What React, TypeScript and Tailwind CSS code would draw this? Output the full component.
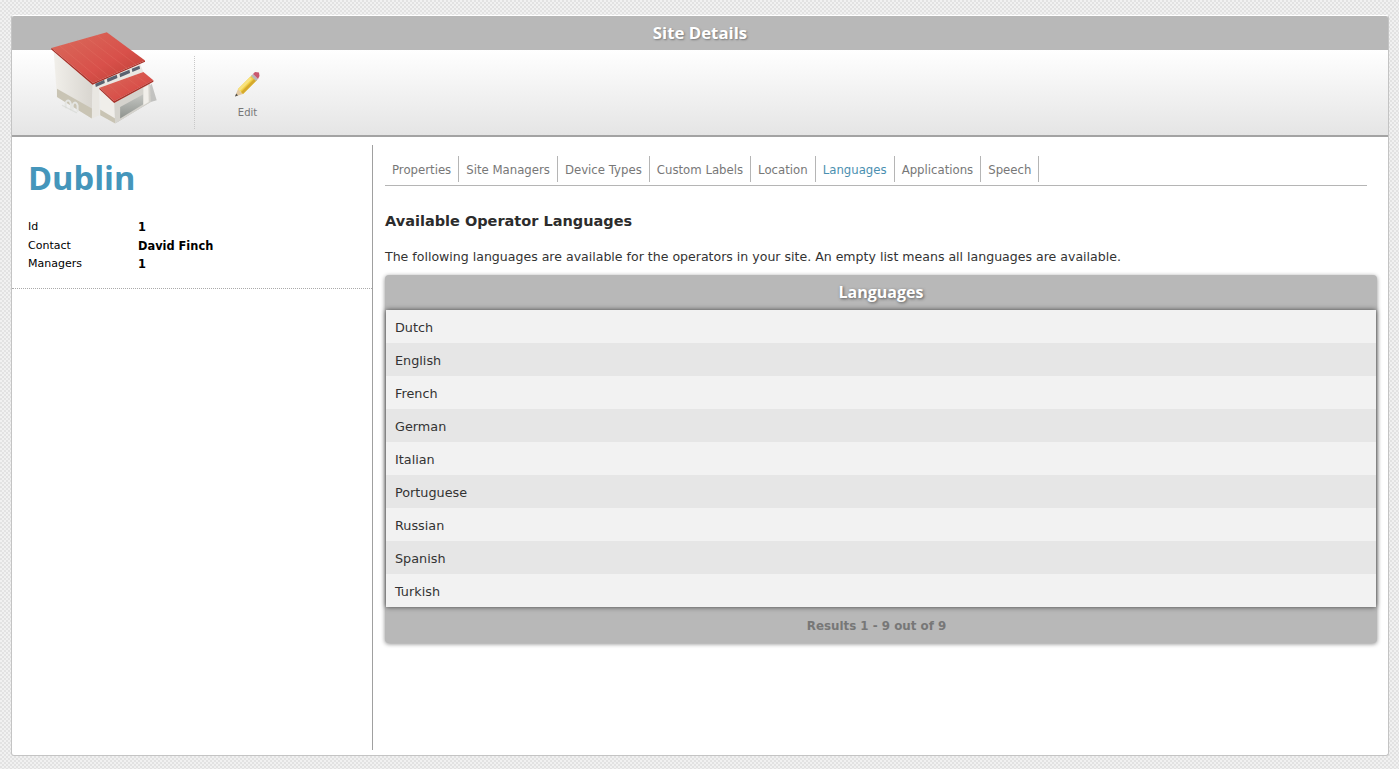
const tabs = ["Properties", "Site Managers", "Device Types", "Custom Labels", "Location", "Languages", "Applications", "Speech"];
const languages = ["Dutch", "English", "French", "German", "Italian", "Portuguese", "Russian", "Spanish", "Turkish"];

function BuildingIcon() {
  return (
    <svg className="absolute left-[35px] top-[11px] blur-[0.3px]" width="113" height="100" viewBox="140 80 340 300">
      <defs>
        <linearGradient id="roof" x1="0" y1="0" x2="1" y2="1">
          <stop offset="0" stopColor="#d96c5c" />
          <stop offset="0.6" stopColor="#d8504a" />
          <stop offset="1" stopColor="#bb3e34" />
        </linearGradient>
        <linearGradient id="wall" x1="0" y1="0" x2="1" y2="0">
          <stop offset="0" stopColor="#f1efea" />
          <stop offset="1" stopColor="#d8d5cf" />
        </linearGradient>
        <linearGradient id="door" x1="0" y1="0" x2="0" y2="1">
          <stop offset="0" stopColor="#c4c6c2" />
          <stop offset="1" stopColor="#8f938e" />
        </linearGradient>
      </defs>
      <polygon points="345,370 452,305 470,300 455,250" fill="#8a8a86" opacity="0.45" />
      <polygon points="160,150 278,248 275,355 170,290" fill="url(#wall)" />
      <polygon points="170,265 275,325 275,355 170,290" fill="#c9c4b4" />
      <polygon points="278,248 420,190 430,215 298,262 298,345 275,355" fill="#e9e7e2" />
      <polygon points="285,250 312,238 314,248 287,260" fill="#5a6270" />
      <polygon points="320,235 350,223 352,233 322,246" fill="#5a6270" />
      <polygon points="358,220 388,208 390,218 360,231" fill="#5a6270" />
      <polygon points="395,205 418,196 420,205 397,215" fill="#5a6270" />
      <polygon points="153,143 320,95 435,180 278,248" fill="url(#roof)" />
      <polygon points="153,143 278,248 435,180 435,184 277,253 153,147" fill="#a92f27" />
      <g stroke="#e77c6d" strokeWidth="1.5" opacity="0.55">
        <line x1="178" y1="136" x2="302" y2="240" />
        <line x1="205" y1="128" x2="328" y2="229" />
        <line x1="232" y1="120" x2="355" y2="217" />
        <line x1="260" y1="112" x2="382" y2="205" />
        <line x1="290" y1="104" x2="408" y2="193" />
      </g>
      <polygon points="300,270 342,303 345,370 300,345" fill="#f0eeea" />
      <polygon points="300,328 345,355 345,370 300,345" fill="#c9c4b4" />
      <polygon points="342,303 450,245 452,305 345,370" fill="#d5d3cd" />
      <polygon points="360,320 430,282 430,312 360,355" fill="url(#door)" />
      <polygon points="430,262 445,254 446,305 430,315" fill="#f1efea" />
      <polygon points="298,262 430,215 460,240 342,303" fill="url(#roof)" />
      <polygon points="298,262 342,303 460,240 460,244 342,308 297,266" fill="#a92f27" />
      <g stroke="#e77c6d" strokeWidth="1.2" opacity="0.55">
        <line x1="325" y1="252" x2="365" y2="291" />
        <line x1="352" y1="243" x2="392" y2="276" />
        <line x1="380" y1="233" x2="420" y2="262" />
        <line x1="405" y1="224" x2="442" y2="250" />
      </g>
      <g fill="none" stroke="#e4e5e2" strokeWidth="6" strokeLinecap="round">
        <path d="M197 322 C192 300 208 292 212 312 L212 328" />
        <path d="M218 326 C214 306 228 300 232 316 L232 332" />
      </g>
      <path d="M185 315 L230 338" stroke="#d4d6d2" strokeWidth="4" opacity="0.6" />
    </svg>
  );
}

function PencilIcon() {
  return (
    <svg width="27" height="28" viewBox="0 0 27 28" className="block">
      <polygon points="2,25.5 5,18 10,23" fill="#e3c9a0" />
      <polygon points="2,25.5 3.2,22.4 5,24.4" fill="#4c4c4c" />
      <polygon points="5,18 19,4 24,9 10,23" fill="#f1cf45" />
      <polygon points="5,18 17,6 19,8 7,20" fill="#f8e27d" />
      <polygon points="8,21 21,8 24,9 10,23" fill="#d5a92d" />
      <polygon points="18,5 20,3 25,8 23,10" fill="#b9b9b9" />
      <polygon points="20,3 22,1 26,1.5 26.5,5 25,8" fill="#c9586f" />
    </svg>
  );
}

export default function App() {
  return (
    <div className="h-[769px] w-[1399px] overflow-hidden bg-[repeating-conic-gradient(#e2e2e2_0_25%,#f1f1f1_0_50%)] bg-[length:4px_4px] pl-[11px] pr-[10px] pt-[15px] font-['DejaVu_Sans',sans-serif]">
      <div className="relative flex h-[741px] flex-col rounded-[3px] border border-[#c4c4c4] border-t-white bg-white">
        <div className="flex h-[34px] items-center justify-center rounded-t-[2px] bg-[#b8b8b8] font-['Open_Sans',sans-serif] text-[16.8px] font-bold text-white [text-shadow:1px_1px_2px_#777]">
          Site Details
        </div>

        <div className="flex h-[87px] border-b-2 border-[#a3a3a3] bg-gradient-to-b from-white to-[#e5e5e5]">
          <div className="my-[6px] w-[183px] border-r border-dotted border-[#c8c8c8]" />
          <div className="ml-[38px] flex flex-col items-center pt-[21px]">
            <PencilIcon />
            <span className="ml-[2px] mt-[7px] text-[10px] leading-[14px] text-[#777]">Edit</span>
          </div>
        </div>
        <BuildingIcon />

        <div className="flex min-h-0 flex-1 pt-[8px] pb-[5px]">
          <div className="w-[361px] border-r border-[#a0a0a0]">
            <div className="h-[144px] border-b border-dotted border-[#aaa] pl-[16px]">
              <h1 className="pt-[10px] font-['Open_Sans',sans-serif] text-[32.6px] font-bold leading-[46px] text-[#4596bb]">Dublin</h1>
              <dl className="mt-[17px] grid grid-cols-[110px_1fr] text-[11px] leading-[18.5px] text-black">
                <dt>Id</dt>
                <dd className="text-[11.4px] font-bold">1</dd>
                <dt>Contact</dt>
                <dd className="text-[11.4px] font-bold">David Finch</dd>
                <dt>Managers</dt>
                <dd className="text-[11.4px] font-bold">1</dd>
              </dl>
            </div>
          </div>

          <div className="flex-1 pl-[12px] pr-[11px] pt-[11px]">
            <div className="mr-[10px] flex h-[30px] border-b border-[#b5b5b5]">
              {tabs.map((t) => (
                <div
                  key={t}
                  className={`flex h-[26px] items-center border-r border-[#b5b5b5] px-[7px] pt-[3px] text-[11.73px] ${t === "Languages" ? "text-[#4a8fb0]" : "text-[#777]"}`}
                >
                  {t}
                </div>
              ))}
            </div>

            <h2 className="mt-[25px] text-[14.5px] font-bold leading-[20px] text-[#2c2c2c]">Available Operator Languages</h2>
            <p className="mt-[18px] text-[12.55px] leading-[16px] text-[#333]">
              The following languages are available for the operators in your site. An empty list means all languages are available.
            </p>

            <div className="mt-[10px] rounded-[4px] bg-[#b8b8b8] shadow-[0_1px_4px_rgba(0,0,0,0.45)]">
              <div className="flex h-[35px] items-center justify-center pb-[2px] font-['Open_Sans',sans-serif] text-[16px] font-bold text-white [text-shadow:1px_1px_3px_#555]">
                Languages
              </div>
              <div className="mx-px shadow-[0_0_5px_rgba(0,0,0,0.65)]">
                {languages.map((l, i) => (
                  <div
                    key={l}
                    className={`flex h-[33px] items-center pl-[9px] pt-[2px] text-[12.8px] text-[#333] ${i % 2 === 0 ? "bg-[#f2f2f2]" : "bg-[#e6e6e6]"}`}
                  >
                    {l}
                  </div>
                ))}
              </div>
              <div className="flex h-[36px] items-center justify-center pr-[9px] pt-[3px] text-[11.85px] font-bold text-[#777]">
                Results 1 - 9 out of 9
              </div>
            </div>
          </div>
        </div>
      </div>
    </div>
  );
}
